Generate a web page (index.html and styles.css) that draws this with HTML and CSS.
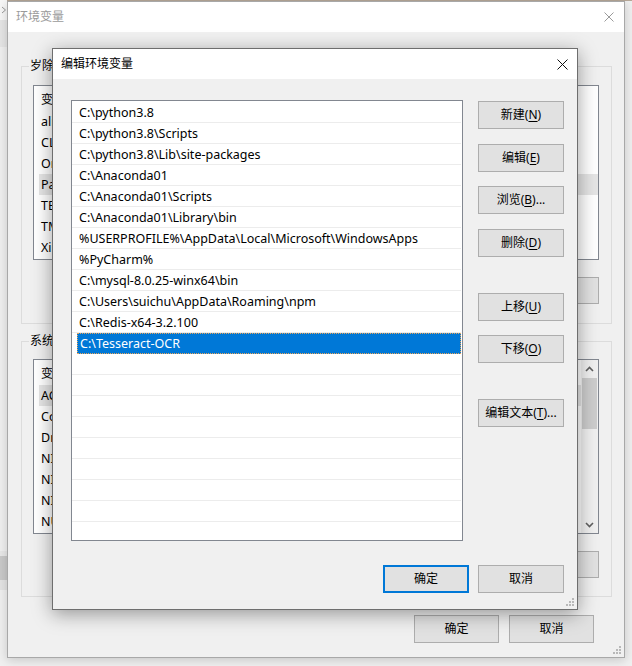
FILE: index.html
```html
<!DOCTYPE html>
<html lang="zh-CN">
<head>
<meta charset="utf-8">
<title>编辑环境变量</title>
<link rel="stylesheet" href="styles.css">
</head>
<body>
<div class="desktop">
  <div class="topline"></div>
  <div class="strip">
    <div class="strip-top"><svg class="chev" width="6" height="8" viewBox="0 0 6 8"><path d="M1 1 L4.5 4 L1 7" fill="none" stroke="#9a9a9a" stroke-width="1"/></svg></div>
    <div class="strip-a"></div>
    <div class="strip-b"></div>
    <div class="strip-c"></div>
    <div class="strip-bar"></div>
    <div class="strip-d"></div>
    <div class="strip-e"></div>
  </div>

  <div class="win outer">
    <div class="titlebar">
      <span class="title inactive">环境变量</span>
      <svg class="close" width="10" height="10" viewBox="0 0 10 10"><path d="M0.5 0.5 L9.5 9.5 M9.5 0.5 L0.5 9.5" stroke="#9a9a9a" stroke-width="1"/></svg>
    </div>
    <div class="outer-body">
      <div class="group g1">
        <span class="legend">岁除 的用户变量(<u>U</u>)</span>
        <div class="lv">
          <div class="lv-content">
            <div class="lv-head"><span class="c1">变量</span><span class="c2">值</span></div>
            <div class="lv-row">aliyun</div>
            <div class="lv-row">CLASSPATH</div>
            <div class="lv-row">OneDrive</div>
            <div class="lv-row sel">Path</div>
            <div class="lv-row">TEMP</div>
            <div class="lv-row">TMP</div>
            <div class="lv-row">Xilinx</div>
          </div>
        </div>
        <div class="gbtns">
          <button class="btn gb">新建(<u>N</u>)...</button>
          <button class="btn gb">编辑(<u>E</u>)...</button>
          <button class="btn gb">删除(<u>D</u>)</button>
        </div>
      </div>

      <div class="group g2">
        <span class="legend">系统变量(<u>S</u>)</span>
        <div class="lv">
          <div class="lv-content">
            <div class="lv-head"><span class="c1">变量</span><span class="c2">值</span></div>
            <div class="lv-row sel">ACSvcPort</div>
            <div class="lv-row">ComSpec</div>
            <div class="lv-row">DriverData</div>
            <div class="lv-row">NIEXTCCOMPILERSUPP</div>
            <div class="lv-row">NIDAQmxSwitchDir</div>
            <div class="lv-row">NIPYTHON</div>
            <div class="lv-row">NUMBER_OF_PROCESSORS</div>
          </div>
          <div class="scrollbar">
            <div class="sb-arrow"><svg width="9" height="6" viewBox="0 0 9 6"><path d="M1 5 L4.5 1.5 L8 5" fill="none" stroke="#606060" stroke-width="1.6"/></svg></div>
            <div class="sb-thumb"></div>
            <div class="sb-track"></div>
            <div class="sb-arrow"><svg width="9" height="6" viewBox="0 0 9 6"><path d="M1 1 L4.5 4.5 L8 1" fill="none" stroke="#606060" stroke-width="1.6"/></svg></div>
          </div>
        </div>
        <div class="gbtns">
          <button class="btn gb">新建(<u>W</u>)...</button>
          <button class="btn gb">编辑(<u>I</u>)...</button>
          <button class="btn gb">删除(<u>L</u>)</button>
        </div>
      </div>

      <div class="outer-foot">
        <button class="btn fb">确定</button>
        <button class="btn fb">取消</button>
      </div>
    </div>
    <svg class="grip grip-outer" width="9" height="9" viewBox="0 0 9 9"><g fill="#b8b8b8"><rect x="6" y="0" width="2" height="2"/><rect x="3" y="3" width="2" height="2"/><rect x="6" y="3" width="2" height="2"/><rect x="0" y="6" width="2" height="2"/><rect x="3" y="6" width="2" height="2"/><rect x="6" y="6" width="2" height="2"/></g></svg>
  </div>

  <div class="win front">
    <div class="titlebar front-title">
      <span class="title">编辑环境变量</span>
      <svg class="close" width="11" height="11" viewBox="0 0 11 11"><path d="M0.5 0.5 L10.5 10.5 M10.5 0.5 L0.5 10.5" stroke="#111" stroke-width="1"/></svg>
    </div>
    <div class="front-body">
      <div class="plist">
        <div class="prow">C:\python3.8</div>
        <div class="prow">C:\python3.8\Scripts</div>
        <div class="prow">C:\python3.8\Lib\site-packages</div>
        <div class="prow">C:\Anaconda01</div>
        <div class="prow">C:\Anaconda01\Scripts</div>
        <div class="prow">C:\Anaconda01\Library\bin</div>
        <div class="prow">%USERPROFILE%\AppData\Local\Microsoft\WindowsApps</div>
        <div class="prow">%PyCharm%</div>
        <div class="prow">C:\mysql-8.0.25-winx64\bin</div>
        <div class="prow">C:\Users\suichu\AppData\Roaming\npm</div>
        <div class="prow">C:\Redis-x64-3.2.100</div>
        <div class="prow psel">C:\Tesseract-OCR</div>
        <div class="prow"></div>
        <div class="prow"></div>
        <div class="prow"></div>
        <div class="prow"></div>
        <div class="prow"></div>
        <div class="prow"></div>
        <div class="prow"></div>
        <div class="prow"></div>
        <div class="prow"></div>
      </div>
      <div class="side">
        <button class="btn sb">新建(<u>N</u>)</button>
        <button class="btn sb">编辑(<u>E</u>)</button>
        <button class="btn sb">浏览(<u>B</u>)...</button>
        <button class="btn sb">删除(<u>D</u>)</button>
        <button class="btn sb far">上移(<u>U</u>)</button>
        <button class="btn sb">下移(<u>O</u>)</button>
        <button class="btn sb far">编辑文本(<u>T</u>)...</button>
      </div>
      <div class="front-foot">
        <button class="btn ffb default">确定</button>
        <button class="btn ffb">取消</button>
      </div>
    </div>
    <svg class="grip grip-front" width="9" height="9" viewBox="0 0 9 9"><g fill="#b8b8b8"><rect x="6" y="0" width="2" height="2"/><rect x="3" y="3" width="2" height="2"/><rect x="6" y="3" width="2" height="2"/><rect x="0" y="6" width="2" height="2"/><rect x="3" y="6" width="2" height="2"/><rect x="6" y="6" width="2" height="2"/></g></svg>
  </div>
</div>
</body>
</html>
```
FILE: styles.css
```css
* { box-sizing: border-box; }

html, body {
  margin: 0;
  padding: 0;
}

body {
  width: 632px;
  height: 666px;
  overflow: hidden;
  font-family: "Noto Sans", "Noto Sans CJK SC", sans-serif;
  font-size: 12px;
  color: #000;
}

.desktop {
  position: relative;
  width: 632px;
  height: 666px;
  background: #f0f0f0;
  overflow: hidden;
}

.topline {
  height: 1px;
  background: #b7a898;
}

/* window peeking on the left edge */
.strip {
  position: absolute;
  left: 0;
  top: 0;
  width: 7px;
  height: 666px;
  display: flex;
  flex-direction: column;
}
.strip-top { height: 20px; background: #f7f7f7; display: flex; align-items: center; padding-left: 1px; }
.strip-a { height: 27px; background: #e6e6e6; }
.strip-b { height: 504px; background: #f0f0f0; }
.strip-c { height: 5px; background: #e8e8e8; }
.strip-bar { height: 24px; background: #c9c9c9; }
.strip-d { height: 10px; background: #e4e4e4; }
.strip-e { flex: 1; background: #f0f0f0; }

.win {
  position: absolute;
  display: flex;
  flex-direction: column;
  background: #f0f0f0;
}

.titlebar {
  height: 30px;
  flex: none;
  background: #fff;
  display: flex;
  align-items: center;
  justify-content: space-between;
  padding: 0 10px 0 8px;
}

.title { font-size: 12px; line-height: 16px; }
.title.inactive { color: #9a9a9a; }

/* ---------- background window ---------- */
.outer {
  left: 7px;
  top: 1px;
  width: 618px;
  height: 657px;
  border: 1px solid #a8a8a8;
  box-shadow: 0 2px 10px rgba(0, 0, 0, 0.18);
}

.outer-body {
  flex: 1;
  display: flex;
  flex-direction: column;
  padding: 0 12px 0 13px;
}

.group {
  position: relative;
  border: 1px solid #dcdcdc;
  display: flex;
  flex-direction: column;
  padding: 18px 12px 0 11px;
}
.g1 { margin-top: 34px; height: 258px; }
.g2 { margin-top: 17px; height: 256px; padding-top: 17px; }

.legend {
  position: absolute;
  top: -9px;
  left: 7px;
  padding: 0 1px;
  background: #f0f0f0;
  line-height: 16px;
  white-space: nowrap;
}

.lv {
  height: 175px;
  border: 1px solid #828790;
  background: #fff;
  display: flex;
  overflow: hidden;
}

.lv-content {
  flex: 1;
  overflow: hidden;
  font-size: 12.5px;
}

.lv-head {
  height: 25px;
  display: flex;
  align-items: center;
  padding-left: 7px;
  font-size: 12px;
}
.lv-head .c1 { width: 150px; }

.lv-row {
  height: 21px;
  line-height: 21px;
  margin: 0 0 0 5px;
  padding-left: 2px;
  white-space: nowrap;
}
.lv-row.sel { background: #e5e5e5; }

.scrollbar {
  width: 17px;
  flex: none;
  background: #f0f0f0;
  display: flex;
  flex-direction: column;
  align-items: center;
}
.sb-arrow {
  height: 17px;
  width: 17px;
  display: flex;
  align-items: center;
  justify-content: center;
}
.sb-thumb {
  width: 15px;
  height: 51px;
  margin-top: 1px;
  background: #cdcdcd;
}
.sb-track { flex: 1; }

.gbtns {
  display: flex;
  justify-content: flex-end;
  gap: 10px;
  margin-top: 17px;
}

.btn {
  font-family: "Noto Sans", "Noto Sans CJK SC", sans-serif;
  font-size: 12px;
  color: #000;
  background: #e1e1e1;
  border: 1px solid #adadad;
  padding: 0;
  margin: 0;
  display: flex;
  align-items: center;
  justify-content: center;
  line-height: 16px;
}
.btn u { text-underline-offset: 2px; }

.gb { width: 85px; height: 27px; }

.outer-foot {
  display: flex;
  justify-content: flex-end;
  gap: 10px;
  margin-top: 18px;
  padding-right: 18px;
}
.fb { width: 85px; height: 28px; }

.grip {
  position: absolute;
  right: 2px;
  bottom: 2px;
}

/* ---------- front dialog ---------- */
.front {
  left: 52px;
  top: 48px;
  width: 526px;
  height: 562px;
  border: 1px solid #6e6e6e;
  box-shadow: 0 4px 18px rgba(0, 0, 0, 0.38);
}

.front-title { padding-right: 9px; }

.front-body {
  display: grid;
  grid-template-columns: 392px 86px;
  column-gap: 15px;
  align-items: start;
  padding: 21px 13px 0 18px;
}

.plist {
  height: 441px;
  border: 1px solid #828790;
  background: #fff;
  padding: 1px 1px 0 0;
  overflow: hidden;
  font-size: 12.5px;
}

.prow {
  height: 21px;
  line-height: 22px;
  padding-left: 7px;
  border-bottom: 1px solid #ececec;
  white-space: nowrap;
  overflow: hidden;
}
.prow.psel {
  margin-left: 5px;
  padding-left: 2px;
  background: #0078d7;
  color: #fff;
  border: 1px dotted #e9a55a;
  line-height: 20px;
}

.side {
  display: flex;
  flex-direction: column;
  gap: 14.5px;
  padding-top: 1px;
}
.sb { width: 86px; height: 28px; }
.sb.far { margin-top: 21.5px; }

.front-foot {
  grid-column: 1 / -1;
  display: flex;
  justify-content: flex-end;
  gap: 9px;
  margin-top: 24px;
}
.ffb { width: 86px; height: 28px; }
.ffb.default { border: 2px solid #0078d7; }
```
